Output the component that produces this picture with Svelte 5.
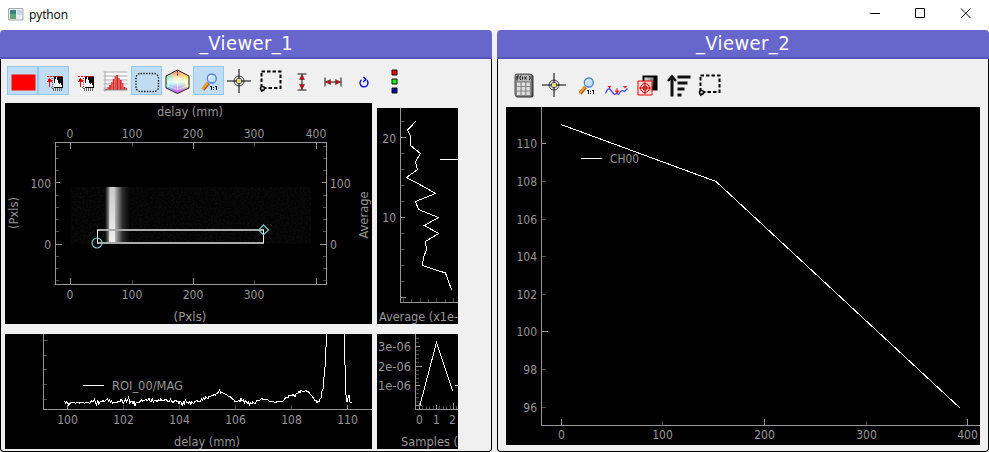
<script>
  const leftTools = [
    { icon: 'red', on: true }, { icon: 'level', on: true }, { icon: 'level' }, { icon: 'histogram' },
    { icon: 'roi', on: true }, { icon: 'colour' }, { icon: 'zoom', on: true }, { icon: 'target' },
    { icon: 'select' }, { icon: 'vertical' }, { icon: 'horizontal' }, { icon: 'rotate' }, { icon: 'rgb' }
  ];
  const rightTools = ['calculator', 'target', 'zoom', 'extrema', 'overlay', 'sort', 'select'];
  const bars = [1, 3, 5, 8, 11, 14, 15, 12, 10, 7, 3, 2];
  const xTicks = [[70.5, '0', 6], [132.5, '100', 4], [193.5, '200', 6], [254.5, '300', 4], [316.5, '400', 6]];
  const sideTicks = [146.5, 158.5, 170.5, 195.5, 207.5, 219.5, 231.5, 256.5, 268.5, 280.5];
  const delays = [[67.5, 100], [123.5, 102], [179.5, 104], [235.5, 106], [291.5, 108], [347.5, 110]];
  const noise = [0, 2, 1, 2, 4, 3, 1, 1, 2, 1, 2, 2, 1, 1, 2, 1, 1, 1, 2, 2, 1, 1, 1, 2, 2, 0, 1, 0, -2, 2, 4, -1, 3, 1, 0, 1, -1, 1, 0, -1, -2, 0, -1, 1, 0, 2, 1, 1, 1, 2, 0, 0, 1, -2, 0, 2, 0, -2, 1, -1, -4, 2, 0, 0, 3, 0, 5, 1, 1, 2, 1, 0, -1, 0, -1, -1, -2, 0, -1, -3, 0, 0, -2, 1, -1, -1, 0, 0, -1, 0, -2, 0, -1, 0, -2, -2, 0, 0, 0, -2, 0, 1, 1, 0, -1, 1, 0, 3, 0, 1, 4, 1, 3, -1, 1, 1, 2, 1, 3, 1, 2, 2, 0, 0, -1, 1, 0, 0, -2, -1, -3, -2, -4, -3, -2, -5, -4, -5, -6, -5, -7, -6, -8, -8, -9, -11, -8, -9, -8, -8, -7, -7, -6, -5, -5, -4, -3, -2, -2, 0, 0, 1, 0, -1, 1, -3, 0, -1, 2, 0, 1, 2, 1, 4, 2, 3, 1, 2, 3];
  const trace = noise.map((d, i) => `${(64.5 + i * 1.07).toFixed(1)},${401 + d}`).join(' ') +
    ' 257,400 258,401 260,400 262,398.5 263,400 265,399 268,400 270,402 273,401 275,403 278,401 282,402 284,400 286,397 288,398 289,395 292,396 293,394 295,397 296,394 298,393 299,391 300,393 301,390 303,392 304,391 305,391 306,390 307,392 308,391 310,394 312,396 314,399 315,401 316,400 317,403 318,401 319,402 320,399 321,398 322,391 323,389 324,377 325,367 326,347 327,334';
  const counts = [[110, 143.5], [108, 181.5], [106, 219.5], [104, 256.5], [102, 294.5], [100, 331.5], [98, 369.5], [96, 407.5]];
  const positions = [[561.5, 0], [662.5, 100], [764.5, 200], [866.5, 300], [967.5, 400]];
</script>

{#snippet label(x, y, text, w = null, anchor = 'middle')}
  <text {x} {y} text-anchor={anchor} textLength={w} lengthAdjust="spacingAndGlyphs">{text}</text>
{/snippet}

{#snippet icon(name)}
  <svg width="28" height="28" viewBox="1.5 .5 28 28" class="glyph">
    {#if name === 'red'}
      <path fill="#f00" d="M4 8h24v16H4z" />
    {:else if name === 'level'}
      <g shape-rendering="crispEdges">
        <path stroke="#666" stroke-dasharray="1 1" d="M13.500 11v12M12 20.500h2" />
        <path d="M15 9h9v12h-9z" />
        <path fill="#fff" d="M15 20v-4h1v-4h1v-2h1v3h1v3h1v1h1v-1h1v2h1v2z" />
        <path fill="#666" d="M14 21h1v3h-1zM16 21h1v3h-1zM18 21h1v3h-1zM20 21h1v3h-1zM22 21h1v3h-1z" />
        <path stroke="#f00" stroke-dasharray="2 1" d="M8 9.500h16" />
        <path fill="#f00" d="M10 11h1v1h1v1h1v2h-2v5h-1v-5H8v-1h1v-2h1z" />
      </g>
    {:else if name === 'histogram'}
      <path fill="#fafafa" d="M4 5h23v18H4z" />
      <path stroke="#aaa" fill="none" d="M4.500 5v20M3 5.500h24M3 9.500h24M3 13.500h24M3 17.500h24M3 21.500h24" />
      {#each bars as h, i}<path fill={i % 2 ? '#e85050' : '#d22828'} d={`M${5 + i * 1.8} ${23.5 - h}h1.800v${h}h-1.800z`} />{/each}
      <path stroke="#888" d="M3 23.500h24" />
    {:else if name === 'roi'}
      <rect x="4.500" y="7" width="22.500" height="18" rx="4.500" fill="none" stroke="#111" stroke-width="1.400" stroke-dasharray="1.400 1.400" />
    {:else if name === 'colour'}
      <foreignObject x="3" y="3" width="24" height="24"><div class="hexagon"></div></foreignObject>
      <path fill="none" stroke="#222" d="m15 3.500 11.500 6v12l-11.500 5.500-11.500-5.500v-12z" />
      <path fill="none" stroke="#222" stroke-dasharray="2 1" d="M15 4v5" />
      <path fill="none" stroke="#fff" opacity=".55" d="M4 19l11-9 11 9M4 19l11 4 11-4M15 10v13M9 10l-4 11M21 10l4 11" />
    {:else if name === 'zoom'}
      <path stroke="#9a5a20" stroke-width="3.600" d="m9.500 23 5.500-6.500" />
      <path stroke="#ff9a2c" stroke-width="2.200" d="m9 22.700 5.500-6.500" />
      <circle cx="18.300" cy="12" r="4.500" fill="#c4e2fd" stroke="#4b83ce" stroke-width="1.300" />
      <path stroke="#fff" fill="none" d="M15.500 12q0-2.700 3-3" />
      <g stroke="#111" shape-rendering="crispEdges"><path d="M16 19.500h2M17.500 19v4M21 19.500h2M22.500 19v4M19.500 20v1M19.500 22v1" /></g>
    {:else if name === 'target'}
      <circle cx="14.500" cy="14.500" r="5" fill="#ddd" stroke="#444" />
      <circle cx="14.500" cy="14.500" r="2.700" fill="#eee" stroke="#555" />
      <path stroke="#000" d="M2.500 14.500H12M17 14.500h9.500M14.500 2.500V12M14.500 17v9.500" />
      <path fill="#e9d638" d="M13 13h3v3h-3z" />
    {:else if name === 'select'}
      <rect x="6" y="5" width="19" height="16.500" fill="none" stroke="#000" stroke-width="2" stroke-dasharray="3.500 2" />
      <circle cx="7" cy="22" r="2" fill="#eee" stroke="#000" stroke-width="1.600" />
      <path stroke="#000" stroke-width="1.500" d="m7 23-1 2.500" />
    {:else if name === 'vertical'}
      <path stroke="#111" d="M11 7.500h9M11 23.500h9M15.500 8v15" /><path fill="#d00" stroke="#333" stroke-width=".5" d="m15.500 8-2.500 5h5zM15.500 23l-2.500-5h5z" />
    {:else if name === 'horizontal'}
      <path stroke="#111" d="M7.500 11v9M23.500 11v9M8 15.500h15" /><path fill="#d00" stroke="#333" stroke-width=".5" d="m8 15.500 5-2.500v5zM23 15.500l-5-2.500v5z" />
    {:else if name === 'rotate'}
      <path fill="none" stroke="#00f" stroke-width="1.300" d="M13 13.300a4 4 0 1 0 5.500.5" /><path fill="none" stroke="#00f" stroke-width="1.300" d="m15 10.500 2.500 2.500-3 2.500" />
    {:else if name === 'rgb'}
      <g stroke="#111"><path fill="#f00" d="M12.500 3.500h5v5h-5z" /><path fill="#0f0" d="M12.500 12.500h5v5h-5z" /><path fill="#00a" d="M12.500 21.500h5v5h-5z" /></g>
    {:else if name === 'calculator'}
      <rect x="7" y="4" width="18" height="23" rx="2" fill="#333" />
      <rect x="6.500" y="3.500" width="17" height="22.500" rx="2" fill="#888" stroke="#555" />
      <path fill="#bbb" d="M8 4.500h14v6H8z" />
      {#each [0, 1, 2] as row}{#each [0, 1, 2] as col}<rect x={8.500 + col * 4.700} y={12 + row * 4.500} width="3.500" height="3.500" fill="#ddd" />{/each}{/each}
      <path fill="none" stroke="#111" d="M8.500 10V5.500h2M8.500 7.500h1.500M12.500 5l-1 1.500v2l1 1M14 6v3M16 6l2 3m0-3-2 3M20.500 5l1 1.500v2l-1 1" />
    {:else if name === 'extrema'}
      <path fill="none" stroke="#44f" stroke-width="1.300" d="M4 23l2-4 2-1 3 4 2 2 2-1 2 1 2-3 2-1 2 1 3-3" />
      <path fill="#e22" d="M6 15.500h4L8 18zM21.500 15.500h4.500L23.500 18zM13 20h5l-2.500 3.500z" /><path stroke="#e22" d="M15.500 17.500v3" />
    {:else if name === 'overlay'}
      <path d="M10 5h15v15H10z" /><path fill="url(#sheen)" d="M12 7h9v9h-9z" />
      <path fill="#f3dede" fill-opacity=".85" stroke="#f00" d="M5.500 10.500h14v14h-14z" />
      <g fill="none" stroke="#d00"><circle cx="12.500" cy="17.500" r="4.500" /><circle cx="12.500" cy="17.500" r="2" /><path d="M12.500 11.500v12M6.500 17.500h12" /></g>
    {:else if name === 'sort'}
      <path stroke="#111" stroke-width="3" d="M8.500 26V8" /><path fill="none" stroke="#111" stroke-width="2.500" d="m4.500 10.500 4-4.500 4 4.500" />
      <path fill="#111" d="M14 5h13v3H14zM14 11h10v3H14zM14 17h7v3h-7zM14 23h4v3h-4z" />
    {/if}
  </svg>
{/snippet}

<div class="window">
  <div class="caption">
    <svg width="16" height="13" viewBox="0 0 16 13"><path fill="#e8eef0" stroke="#aaa" d="M.5.500h14.500v11.500H.5z" /><path fill="#397f88" d="M2 2h6v9H2z" /><path fill="#60a779" d="M2 6h6v5H2z" /><path fill="#c5d7df" d="M9 2h5v5H9z" /></svg>
    <span>python</span>
    <svg class="controls" width="102" height="12" viewBox="0 0 102 12"><g fill="none" stroke="#000"><path d="M0 5.500h10M45.500 .5h9v9h-9z" /><path d="m91 .5 9.500 9.500m0-9.500L91 10" /></g></svg>
  </div>
  <div class="docks">
    <section>
      <h2>_Viewer_1</h2>
      <div class="body left">
        <div class="tools">
          {#each leftTools as tool}<button class:on={tool.on} aria-label={tool.icon}>{@render icon(tool.icon)}</button>{/each}
        </div>
        <div class="plots">
          <svg width="367" height="221" viewBox="5 103 367 221">
            <defs>
              <linearGradient id="beam"><stop offset="0" stop-color="#060606" /><stop offset=".1" stop-color="#555" /><stop offset=".22" stop-color="#ccc" /><stop offset=".36" stop-color="#ccc" /><stop offset=".5" stop-color="#888" /><stop offset=".7" stop-color="#2c2c2c" /><stop offset="1" stop-color="#050505" /></linearGradient>
              <linearGradient id="glow" x2="0" y2="1"><stop offset="0" stop-color="#fff" stop-opacity="0" /><stop offset="1" stop-color="#fff" stop-opacity=".75" /></linearGradient>
              <linearGradient id="sheen" x2="1" y2="1"><stop offset="0" stop-color="#eee" /><stop offset="1" stop-color="#333" /></linearGradient>
              <filter id="grain" x="0" y="0" width="1" height="1" color-interpolation-filters="sRGB"><feTurbulence type="fractalNoise" baseFrequency=".6" numOctaves="2" seed="4" /><feColorMatrix values=".09 0 0 0 -.022 .09 0 0 0 -.022 .09 0 0 0 -.022 0 0 0 0 1" /></filter>
            </defs>
            <path d="M71 187h240v57H71z" filter="url(#grain)" />
            <path fill="url(#beam)" d="M105 187h25v57h-25z" /><path fill="url(#glow)" d="M109 187h6v57h-6z" />
            <path class="axis" d="M55.500 142.500h271v142h-271z" />
            {#each xTicks as [x, t, n]}
              <path class={n > 4 ? 'axis' : 'tick'} d={`M${x} 143v${n}M${x} 284v-${n}`} />
              {@render label(x - 0.5, 138, t)}
              {#if t !== '400'}{@render label(x - 0.5, 299, t)}{/if}
            {/each}
            {#each sideTicks as y}<path class="tick" d={`M56 ${y}h3M326 ${y}h-3`} />{/each}
            <path class="axis" d="M56 182.500h4M326 182.500h-4M56 244.500h6M326 244.500h-6" />
            {@render label(51, 188, '100', null, 'end')}{@render label(51, 249, '0', null, 'end')}
            {@render label(330, 188, '100', null, 'start')}{@render label(330, 249, '0', null, 'start')}
            {@render label(190, 116, 'delay (mm)', 66)}{@render label(190, 321, '(Pxls)', 33)}
            <g transform="rotate(-90 18 213)">{@render label(18, 213, '(Pxls)', 32)}</g>
            <g transform="rotate(-90 368 215)">{@render label(368, 215, 'Average', 47)}</g>
            <path fill="none" stroke="#aaa" stroke-width="2" d="M97 230h167M97 243h167" /><path stroke="#eee" d="M97.500 230v13M263.500 230v13" />
            <g fill="none" stroke="#7cc" stroke-width="1.200"><circle cx="97" cy="243" r="5" /><path d="m263.500 225 5 5-5 5-5-5z" /></g>
          </svg>
          <svg class="low" width="81" height="216" viewBox="377 108 81 216">
            <path class="axis" d="M400.500 108v194.500H458M401 137.500h5M401 297.500h5M401 217.500h4" />
            <path class="tick" d="M401 121.500h3M401 153.500h3M401 169.500h3M401 185.500h3M401 201.500h3M401 233.500h3M401 249.500h3M401 265.500h3M401 281.500h3M403.500 302v-4M411.500 302v-3M420.500 302v-4M428.500 302v-3M436.500 302v-4M445.500 302v-3M453.500 302v-4" />
            {@render label(396, 143, '20', null, 'end')}{@render label(396, 222, '10', null, 'end')}{@render label(379, 321, 'Average (x1e-', 79, 'start')}
            <polyline class="curve" points="415.700,121.500 407.500,130 410.500,136 410.500,145.500 420.500,153.500 415.500,161.500 417.500,169.500 406.500,177.500 421.500,185.500 435.500,193.500 415.500,201.500 418.500,209.500 438.500,217.500 424.500,225.500 438.500,233.500 425.500,241.500 426.500,249.500 423.500,257.500 422.500,265.500 445.500,273 448.500,281.500 451.700,290" />
            <path class="curve" d="M440 159.500h18" />
          </svg>
          <svg width="367" height="115" viewBox="5 334 367 115">
            <path class="axis" d="M43.500 334v75.500H372" />
            <path class="tick" d="M44 340.500h4M44 355.500h3M44 369.500h3M44 384.500h3M44 399.500h3" />
            {#each delays as [x, t]}<path class={t === 100 || t === 110 ? 'axis' : 'tick'} d={`M${x} 409v-4`} />{@render label(x, 424, t)}{/each}
            {@render label(207, 446, 'delay (mm)', 66)}{@render label(112, 390, 'ROI_00/MAG', 71, 'start')}
            <path class="curve" d="M83 385.500h21" />
            <polyline class="curve" points={trace} /><path class="curve" d="m344.500 334 .5 31 1 30 1 7 1-4 1-3 .5 3 .5 4 2 0" />
          </svg>
          <svg width="81" height="115" viewBox="377 334 81 115">
            <path class="axis" d="M415.500 334v75.500H458M416 346.500h4M416 366.500h6M416 385.500h4M416 405.500h6M419.500 409v-6M436.500 409v-4M453.500 409v-6" />
            <path class="tick" d="M416 338.500h3M416 342.500h3M416 350.500h3M416 354.500h3M416 358.500h3M416 362.500h3M416 370.500h3M416 374.500h3M416 378.500h3M416 382.500h3M416 389.500h3M416 393.500h3M416 397.500h3M416 401.500h3M422.500 409v-3M426.500 409v-3M429.500 409v-3M433.500 409v-3M439.500 409v-3M443.500 409v-3M446.500 409v-3M450.500 409v-3M456.500 409v-3" />
            {@render label(411, 351, '3e-06', 33, 'end')}{@render label(411, 371, '2e-06', 33, 'end')}{@render label(411, 390, '1e-06', 33, 'end')}
            {@render label(419.5, 424, '0')}{@render label(436.5, 424, '1')}{@render label(452.5, 424, '2')}
            {@render label(401, 446, 'Samples (', 57, 'start')}
            <path class="curve" d="m420 405 16.500-62.500 16.200 48.500M455 385.500h3" />
          </svg>
        </div>
      </div>
    </section>
    <section>
      <h2>_Viewer_2</h2>
      <div class="body right">
        <div class="tools">{#each rightTools as tool}<button aria-label={tool}>{@render icon(tool)}</button>{/each}</div>
        <svg width="474" height="338" viewBox="506 107 474 338">
          <path class="axis" d="M541.500 107v318.500H980" />
          {#each counts as [t, y]}<path class={t % 10 ? 'tick' : 'axis'} d={`M542 ${y}h${t === 100 ? 6 : 4}`} />{@render label(537, y + 4.5, t, null, 'end')}{/each}
          {#each positions as [x, t]}<path class={t % 200 ? 'tick' : 'axis'} d={`M${x} 425v-${t % 200 ? 4 : 6}`} />{@render label(x, 439, t)}{/each}
          <path class="curve" d="m561 124.500 155 57 244 226.500M581 158.500h21" />{@render label(610, 163, 'CH00', 29, 'start')}
        </svg>
      </div>
    </section>
  </div>
</div>

<style>
  .window { width: 989px; height: 452px; background: #fff; overflow: hidden; font-family: "DejaVu Sans Condensed", "DejaVu Sans", sans-serif; font-stretch: condensed; }
  .caption { height: 30px; display: flex; align-items: center; gap: 5px; padding: 0 17px 2px 8px; box-sizing: border-box; font: 12px "Open Sans", sans-serif; letter-spacing: -.1px; }
  .controls { margin-left: auto; }
  .docks { height: 422px; display: grid; grid-template-columns: 492px 492px; gap: 5px; background: #f0f0f0; }
  section { min-width: 0; display: flex; flex-direction: column; }
  h2 { margin: 0; height: 29px; box-sizing: border-box; border-bottom: 2px solid #5555bb; border-radius: 4px 4px 0 0; background: #6666cc; color: #fff; font-size: 20px; letter-spacing: .4px; line-height: 26px; font-weight: 400; text-align: center; }
  .body { flex: 1; min-height: 0; box-sizing: border-box; border: 1px solid #000; border-top: 0; border-radius: 0 0 4px 4px; }
  .left { padding: 7px 0 0 4px; }
  .right { padding: 11px 0 0 8px; }
  .tools { display: flex; padding-left: 2px; height: 37px; }
  .left .plots { display: grid; grid-template-columns: 367px 81px; grid-template-rows: 221px 115px; column-gap: 5px; row-gap: 10px; }
  .low { align-self: end; }
  button { width: 31px; height: 29px; box-sizing: border-box; padding: 0; border: 1px solid transparent; background: none; display: flex; align-items: center; justify-content: center; }
  .on { background: #c0dcf3; border-color: #90c8f6; }
  .glyph { flex: none; }
  .hexagon { width: 24px; height: 24px; clip-path: polygon(50% 3%, 97% 27%, 97% 77%, 50% 99%, 3% 77%, 3% 27%); background: linear-gradient(#fff0 30%, #fff9 50%, #fff0 75%), linear-gradient(90deg, #0ff8, #fff0 40%, #fff0 60%, #fe08), linear-gradient(#f77, #fd9 30%, #cfc 50%, #bbf 70%, #d4f); }
  .plots svg, .right > svg { display: block; background: #000; }
  .right .tools { height: 37px; padding-left: 2px; }
  text { fill: #969696; font-size: 12px; }
  .axis { fill: none; stroke: #969696; shape-rendering: crispEdges; }
  .tick { fill: none; stroke: #4b4b4b; shape-rendering: crispEdges; }
  .curve { fill: none; stroke: #fff; shape-rendering: crispEdges; }
</style>
